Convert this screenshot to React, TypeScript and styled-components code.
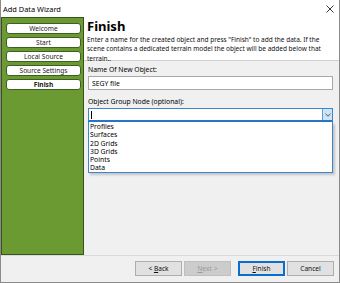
import styled, { createGlobalStyle } from 'styled-components';

const GlobalStyle = createGlobalStyle`
    html, body {
        margin: 0;
        padding: 0;
        background: #ffffff;
    }
    * {
        box-sizing: border-box;
    }
`;

const Window = styled.div`
    width: 340px;
    height: 283px;
    display: flex;
    flex-direction: column;
    border: 1px solid #8a8a8a;
    border-top: none;
    background: #f0f0f0;
    font-family: "Noto Sans", "DejaVu Sans", sans-serif;
    color: #000;
    overflow: hidden;
`;

const TitleBar = styled.div`
    height: 17px;
    flex-shrink: 0;
    background: #ffffff;
    display: flex;
    align-items: center;
    justify-content: space-between;
    padding: 0 5px 0 2px;
    font-size: 7.4px;
`;

const Body = styled.div`
    flex: 1;
    display: flex;
    min-height: 0;
`;

const Sidebar = styled.div`
    width: 83px;
    flex-shrink: 0;
    background: #6a9a31;
    border: 1px solid #36531a;
    padding: 5px 2px 0 4px;
    display: flex;
    flex-direction: column;
    gap: 3px;
`;

const NavItem = styled.div<{ $active?: boolean }>`
    height: 11px;
    background: #ffffff;
    border: 1px solid #3f5e22;
    border-radius: 3px;
    display: flex;
    align-items: center;
    justify-content: center;
    font-size: 6.6px;
    font-weight: ${p => (p.$active ? 700 : 400)};
    color: #222;
`;

const Main = styled.div`
    flex: 1;
    display: flex;
    flex-direction: column;
`;

const Header = styled.div`
    background: #ffffff;
    height: 44px;
    border-bottom: 1px solid #d0d0d0;
    padding: 2px 6px 0 3px;
`;

const Heading = styled.h1`
    margin: 0;
    font-size: 13px;
    font-weight: 700;
    line-height: 15px;
`;

const Description = styled.p`
    margin: 1px 0 0;
    font-size: 6.5px;
    line-height: 9.4px;
    color: #111;
`;

const Content = styled.div`
    flex: 1;
    padding: 3px 6px 0 4px;
    display: flex;
    flex-direction: column;
`;

const Label = styled.div<{ $top?: number }>`
    font-size: 6.8px;
    line-height: 9px;
    margin-top: ${p => p.$top ?? 0}px;
    margin-bottom: 2px;
`;

const TextInput = styled.div`
    height: 14px;
    background: #ffffff;
    border: 1px solid #a8a8a8;
    display: flex;
    align-items: center;
    padding-left: 3px;
    font-size: 6.8px;
`;

const ComboWrap = styled.div`
    position: relative;
`;

const Combo = styled.div`
    height: 14px;
    background: #ffffff;
    border: 1px solid #3d86cf;
    border-bottom: 2px solid #2a74c4;
    display: flex;
    align-items: center;
`;

const Caret = styled.div`
    width: 1px;
    height: 8px;
    background: #000;
    margin-left: 2px;
`;

const ComboField = styled.div`
    flex: 1;
`;

const ArrowButton = styled.div`
    width: 10px;
    height: 100%;
    background: #cce4f7;
    border-left: 1px solid #569de5;
    display: flex;
    align-items: center;
    justify-content: center;
`;

const DropList = styled.ul`
    position: absolute;
    left: 0;
    right: 0;
    top: 14px;
    margin: 0;
    padding: 1px 0 0 1px;
    list-style: none;
    background: #ffffff;
    border: 1px solid #3d86cf;
    border-top: none;
    height: 51px;
    box-shadow: 2px 2px 2px rgba(0, 0, 0, 0.18);
`;

const DropItem = styled.li`
    font-size: 6.8px;
    line-height: 8.3px;
    height: 8.3px;
`;

const Footer = styled.div`
    height: 27px;
    flex-shrink: 0;
    border-top: 1px solid #dadada;
    display: flex;
    align-items: center;
    justify-content: flex-end;
    padding: 0 5px 1px 0;
`;

const Button = styled.button<{ $primary?: boolean; $gap?: number }>`
    width: 47px;
    height: 15px;
    margin-left: ${p => p.$gap ?? 2}px;
    padding: 0;
    font-family: inherit;
    font-size: 6.6px;
    color: #111;
    background: #e1e1e1;
    border: 1px solid ${p => (p.$primary ? '#0a6fcc' : '#adadad')};
    box-shadow: ${p => (p.$primary ? 'inset 0 0 0 1px #0a6fcc' : 'none')};
    &:disabled {
        background: #cccccc;
        border-color: #bfbfbf;
        color: #9a9a9a;
    }
`;

const groups = ['Profiles', 'Surfaces', '2D Grids', '3D Grids', 'Points', 'Data'];
const steps = ['Welcome', 'Start', 'Local Source', 'Source Settings', 'Finish'];

function App() {
    return (
        <>
            <GlobalStyle />
            <Window>
                <TitleBar>
                    <span>Add Data Wizard</span>
                    <svg width="8" height="8" viewBox="0 0 8 8">
                        <path d="M0.5 0.5 L7.5 7.5 M7.5 0.5 L0.5 7.5" stroke="#222" strokeWidth="0.9" />
                    </svg>
                </TitleBar>
                <Body>
                    <Sidebar>
                        {steps.map(s => (
                            <NavItem key={s} $active={s === 'Finish'}>{s}</NavItem>
                        ))}
                    </Sidebar>
                    <Main>
                        <Header>
                            <Heading>Finish</Heading>
                            <Description>
                                Enter a name for the created object and press "Finish" to add the data. If the
                                scene contains a dedicated terrain model the object will be added below that
                                terrain..
                            </Description>
                        </Header>
                        <Content>
                            <Label $top={1}>Name Of New Object:</Label>
                            <TextInput>SEGY file</TextInput>
                            <Label $top={7}>Object Group Node (optional):</Label>
                            <ComboWrap>
                                <Combo>
                                    <Caret />
                                    <ComboField />
                                    <ArrowButton>
                                        <svg width="6" height="4" viewBox="0 0 6 4">
                                            <path d="M0.5 0.8 L3 3.2 L5.5 0.8" fill="none" stroke="#333" strokeWidth="0.8" />
                                        </svg>
                                    </ArrowButton>
                                </Combo>
                                <DropList>
                                    {groups.map(g => (
                                        <DropItem key={g}>{g}</DropItem>
                                    ))}
                                </DropList>
                            </ComboWrap>
                        </Content>
                    </Main>
                </Body>
                <Footer>
                    <Button>&lt; <u>B</u>ack</Button>
                    <Button disabled><u>N</u>ext &gt;</Button>
                    <Button $primary $gap={7}><u>F</u>inish</Button>
                    <Button>Cancel</Button>
                </Footer>
            </Window>
        </>
    );
}

export default App;
